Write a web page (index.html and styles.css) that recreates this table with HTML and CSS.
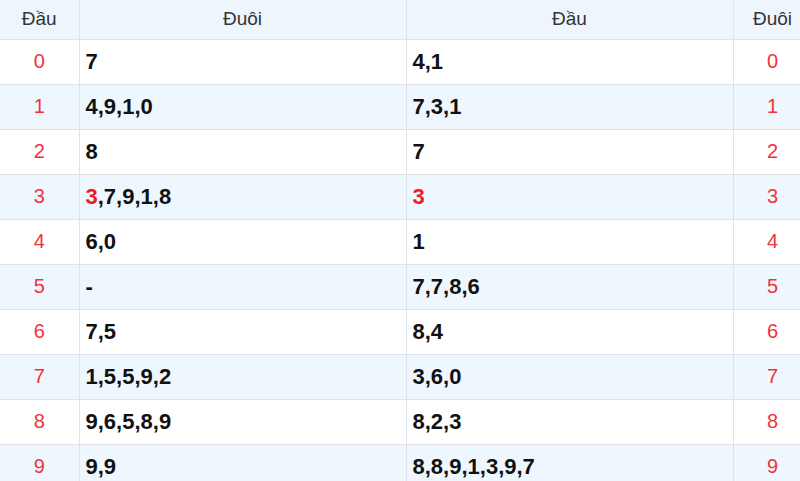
FILE: index.html
```html
<!DOCTYPE html>
<html lang="vi">
<head>
<meta charset="utf-8">
<title>Đầu Đuôi</title>
<link rel="stylesheet" href="styles.css">
</head>
<body>
<table class="loto">
  <colgroup>
    <col class="c-side">
    <col class="c-main">
    <col class="c-main">
    <col class="c-side">
  </colgroup>
  <thead>
    <tr><th>Đầu</th><th>Đuôi</th><th>Đầu</th><th>Đuôi</th></tr>
  </thead>
  <tbody>
    <tr><td class="num">0</td><td class="val">7</td><td class="val">4,1</td><td class="num">0</td></tr>
    <tr><td class="num">1</td><td class="val">4,9,1,0</td><td class="val">7,3,1</td><td class="num">1</td></tr>
    <tr><td class="num">2</td><td class="val">8</td><td class="val">7</td><td class="num">2</td></tr>
    <tr><td class="num">3</td><td class="val"><span class="hl">3</span>,7,9,1,8</td><td class="val"><span class="hl">3</span></td><td class="num">3</td></tr>
    <tr><td class="num">4</td><td class="val">6,0</td><td class="val">1</td><td class="num">4</td></tr>
    <tr><td class="num">5</td><td class="val">-</td><td class="val">7,7,8,6</td><td class="num">5</td></tr>
    <tr><td class="num">6</td><td class="val">7,5</td><td class="val">8,4</td><td class="num">6</td></tr>
    <tr><td class="num">7</td><td class="val">1,5,5,9,2</td><td class="val">3,6,0</td><td class="num">7</td></tr>
    <tr><td class="num">8</td><td class="val">9,6,5,8,9</td><td class="val">8,2,3</td><td class="num">8</td></tr>
    <tr><td class="num">9</td><td class="val">9,9</td><td class="val">8,8,9,1,3,9,7</td><td class="num">9</td></tr>
  </tbody>
</table>
</body>
</html>
```

FILE: styles.css
```css
html, body {
  margin: 0;
  padding: 0;
  overflow: hidden;
  background: #ffffff;
}

body {
  font-family: "Liberation Sans", Arial, sans-serif;
  color: #111;
}

.loto {
  border-collapse: collapse;
  table-layout: fixed;
  width: 809px;
}

.c-side { width: 79px; }
.c-main { width: 327px; }

.loto th,
.loto td {
  border: 1px solid #dfe3e8;
  padding: 0 6px;
}

.loto tr > :first-child { border-left: none; }
.loto thead th { border-top: none; }

.loto th {
  height: 39px;
  box-sizing: border-box;
  background: #eef5fd;
  font-weight: normal;
  font-size: 19px;
  color: #333;
  text-align: center;
}

.loto td {
  height: 45px;
  box-sizing: border-box;
}

.loto tbody tr:nth-child(even) td {
  background: #eef6fe;
}

.num {
  text-align: center;
  font-size: 20px;
  color: #f0333a;
}

.val {
  text-align: left;
  font-size: 22px;
  font-weight: bold;
  color: #111;
  padding-left: 4px;
}

.hl {
  color: #ec1c24;
}
```
